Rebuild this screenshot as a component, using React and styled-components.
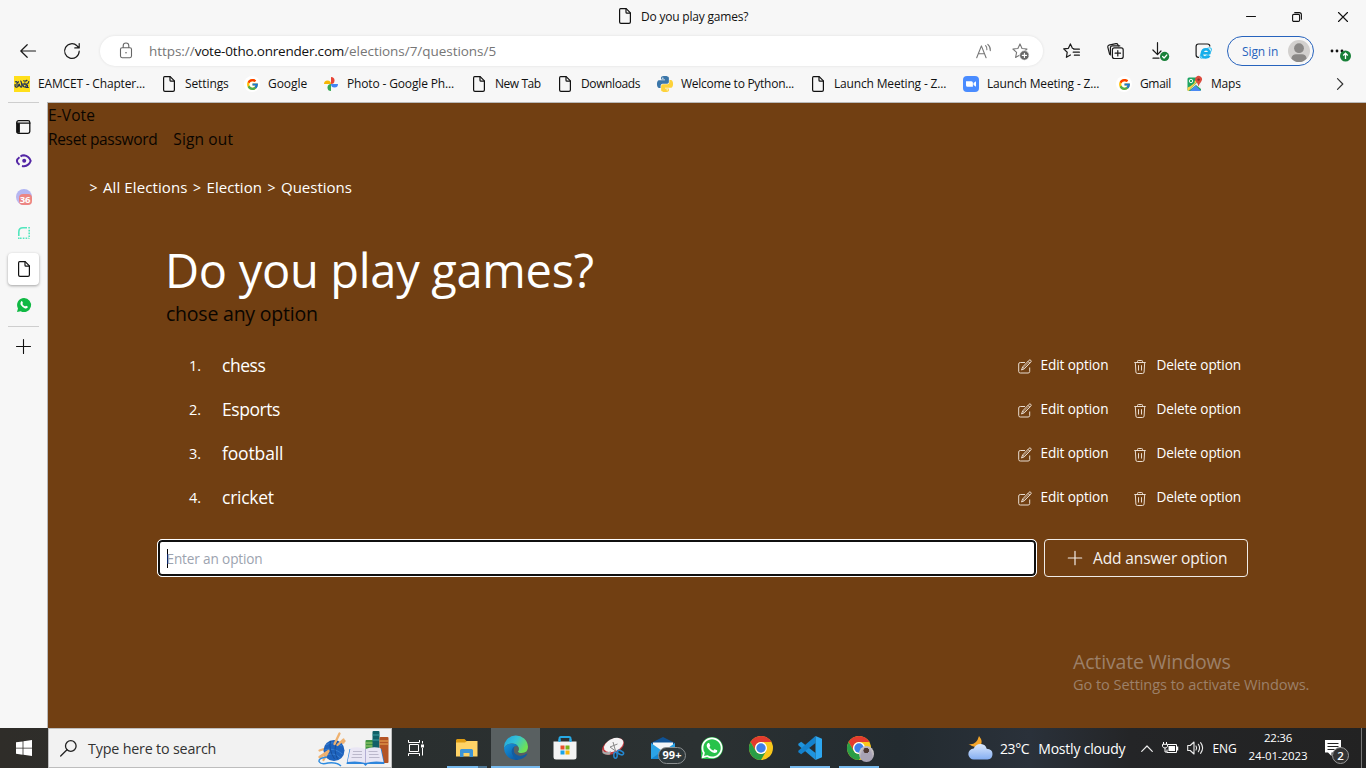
import React from "react";
import styled, { createGlobalStyle } from "styled-components";
import { FcGoogle } from "react-icons/fc";
import { FaWhatsapp } from "react-icons/fa";

const GlobalStyle = createGlobalStyle`
  * { box-sizing: border-box; }
  body {
    margin: 0;
    overflow: hidden;
    background: #f7f7f7;
    color: #111;
    font-family: "Open Sans", "Noto Sans", sans-serif;
  }
  svg { display: block; flex: none; overflow: visible; }
`;

/* ---------- shared ---------- */

const Text = styled.span`
  font-size: ${(p) => p.$size || 12}px;
  letter-spacing: ${(p) => p.$track || 0}px;
  white-space: pre;
`;

const Screen = styled.div`
  width: 1366px;
  height: 768px;
  display: flex;
  flex-direction: column;
  position: relative;
`;

/* ---------- browser chrome ---------- */

const TitleBar = styled.header`
  height: 34px;
  padding-left: 617px;
  display: flex;
  align-items: flex-start;
`;
const TabTitle = styled.div`
  height: 32px;
  display: flex;
  align-items: center;
  gap: 8px;
  flex: 1;
`;
const WindowButtons = styled.div`
  display: flex;
`;
const WindowButton = styled.div`
  width: 46px;
  height: 33px;
  display: flex;
  align-items: center;
  justify-content: center;
`;
const Toolbar = styled.div`
  height: 34px;
  display: flex;
  align-items: center;
`;
const ToolSlot = styled.div`
  width: ${(p) => p.$w}px;
  height: 34px;
  flex: none;
  display: flex;
  align-items: center;
  justify-content: center;
`;
const AddressBar = styled.div`
  width: 943px;
  height: 30px;
  flex: none;
  margin: 0 6px 0 12px;
  padding: 0 5px 0 18px;
  display: flex;
  align-items: center;
  border-radius: 15px;
  background: #fff;
  box-shadow: 0 0 3px rgba(0, 0, 0, 0.1);
  color: #767676;
`;
const Url = styled.div`
  flex: 1;
  margin-left: 15px;
  display: flex;
  strong { font-weight: 400; color: #111; }
`;
const SignIn = styled.div`
  width: 87px;
  height: 30px;
  flex: none;
  border: 1px solid #2763bd;
  border-radius: 15px;
  display: flex;
  align-items: center;
  justify-content: space-between;
  padding: 0 3px 0 14px;
  color: #2763bd;
`;
const Bookmarks = styled.nav`
  height: 34px;
  padding: 0 0 2px 14px;
  display: flex;
  align-items: center;
`;
const Bookmark = styled.div`
  width: ${(p) => p.$w}px;
  flex: none;
  display: flex;
  align-items: center;
  gap: 8px;
  ${Text} { margin-top: -1px; }
`;
const IconBox = styled.span`
  width: 16px;
  height: 16px;
  flex: none;
  display: flex;
  align-items: center;
  justify-content: center;
  border-radius: ${(p) => (p.$round ? "50%" : "0")};
  background: ${(p) => (p.$round ? "#fff" : "none")};
`;

/* ---------- body ---------- */

const Body = styled.div`
  flex: 1;
  min-height: 0;
  display: flex;
`;
const Sidebar = styled.aside`
  width: 47px;
  display: flex;
  flex-direction: column;
  align-items: center;
`;
const SideRule = styled.hr`
  width: 31px;
  height: 1px;
  margin: ${(p) => p.$m};
  border: 0;
  background: #cecece;
`;
const SideItem = styled.div`
  width: 31px;
  height: ${(p) => p.$h || 36}px;
  flex: none;
  display: flex;
  align-items: center;
  justify-content: center;
`;
const ActiveSide = styled.div`
  width: 31px;
  height: 32px;
  margin: 3px 0 2px;
  flex: none;
  display: flex;
  align-items: center;
  justify-content: center;
  border-radius: 4px;
  background: #fff;
  box-shadow: 0 1px 3px rgba(0, 0, 0, 0.35);
`;
const Page = styled.main`
  flex: 1;
  background: #713f12;
  border-top: 1px solid #b9b9b9;
  border-left: 1px solid #b9b9b9;
  color: #fff;
`;
const SiteHeader = styled.div`
  height: 48px;
  color: #0a0500;
`;
const SiteRow = styled.div`
  height: 24px;
  line-height: 24px;
  display: flex;
  gap: 16px;
`;
const Breadcrumb = styled.div`
  display: flex;
  align-items: center;
  gap: 5px;
  height: 24px;
  margin: 24px 0 0 41px;
`;
const Chevron = styled.span`
  width: 9px;
  font-size: 14px;
  text-align: center;
`;
const Question = styled.section`
  width: 1089px;
  margin: 46px 0 0 111px;
`;
const Title = styled.h1`
  margin: 0 0 0 6px;
  height: 50px;
  font-size: 47px;
  line-height: 50px;
  font-weight: 400;
  letter-spacing: -0.3px;
`;
const Subtitle = styled.p`
  margin: 5px 0 15px 7px;
  height: 28px;
  line-height: 28px;
  font-size: 19.5px;
  letter-spacing: -0.22px;
  color: #0a0500;
`;
const OptionRow = styled.div`
  height: 44px;
  display: flex;
  align-items: center;
  padding: 0 7px 0 30px;
`;
const OptionNumber = styled.span`
  width: 33px;
  font-size: 14.5px;
  padding-top: 1px;
`;
const OptionName = styled.span`
  flex: 1;
  font-size: 17.5px;
  letter-spacing: ${(p) => p.$track}px;
`;
const OptionAction = styled.div`
  display: flex;
  align-items: center;
  gap: ${(p) => p.$gap}px;
  margin-left: ${(p) => p.$ml || 0}px;
  padding-bottom: 2px;
  font-size: 13.6px;
  letter-spacing: -0.1px;
  svg { margin-top: 5px; }
`;
const Form = styled.div`
  display: flex;
  gap: 8px;
  margin-top: 20px;
`;
const Field = styled.div`
  width: 880px;
  height: 38px;
  margin-left: -2px;
  border: 1px solid #fff;
  border-radius: 5px;
  background: #fff;
  box-shadow: inset 0 0 0 2px #101010;
  display: flex;
  align-items: center;
  padding-left: 8.5px;
  color: #9ca3af;
`;
const Caret = styled.span`
  width: 1px;
  height: 19px;
  background: #000;
  margin-right: -1px;
`;
const AddButton = styled.button`
  width: 204px;
  height: 38px;
  margin-left: -1px;
  padding: 0 0 0 21px;
  display: flex;
  align-items: center;
  gap: 9px;
  border: 1px solid #f0ebe6;
  border-radius: 4px;
  background: transparent;
  color: #f5f1ee;
  font-family: inherit;
  font-weight: 500;
`;
const Watermark = styled.div`
  position: absolute;
  left: 1073px;
  top: 651px;
  display: flex;
  flex-direction: column;
  color: #9c8069;
  line-height: 22px;
`;

/* ---------- taskbar ---------- */

const Taskbar = styled.footer`
  height: 40px;
  flex: none;
  display: flex;
  color: #fff;
  background: linear-gradient(90deg, #2f2d29 0, #2a2f2f 392px, #2b3132 700px, #232b30 900px, #2a313a 1030px, #242527 1130px, #222 1366px);
`;
const StartButton = styled.div`
  width: 48px;
  display: flex;
  align-items: center;
  justify-content: center;
`;
const SearchBox = styled.div`
  width: 344px;
  background: #f2f2f2;
  border: 1px solid #bdbdbd;
  color: #333;
  display: flex;
  align-items: center;
  padding-left: 11px;
`;
const SearchText = styled.div`
  flex: 1;
  padding-left: 11px;
  padding-bottom: 1px;
`;
const TaskItem = styled.div`
  position: relative;
  width: ${(p) => p.$w || 49}px;
  flex: none;
  display: flex;
  align-items: center;
  justify-content: center;
  background: ${(p) => (p.$active ? "#596061" : "transparent")};
  box-shadow: ${(p) => (p.$active ? "inset 0 -2px #76b9ed" : "none")};
`;
const TaskViewItem = styled(TaskItem)`
  padding-right: 2px;
`;
const Running = styled.span`
  position: absolute;
  bottom: 0;
  left: 5px;
  width: 40px;
  height: 2px;
  background: ${(p) => (p.$split ? "linear-gradient(90deg, #76b9ed 31px, #4f7795 31px)" : "#76b9ed")};
`;
const CountBadge = styled.span`
  position: absolute;
  left: 20px;
  top: 19px;
  width: 28px;
  height: 17px;
  border: 1px solid #8b8f90;
  border-radius: 9px;
  background: #30393c;
  font-size: 11px;
  font-weight: 700;
  line-height: 14px;
  text-align: center;
`;
const Tray = styled.div`
  flex: 1;
  display: flex;
  align-items: center;
  justify-content: flex-end;
`;
const Weather = styled.div`
  display: flex;
  align-items: center;
  width: 173px;
`;
const Temperature = styled(Text)`
  margin: 0 9px 0 7px;
`;
const Clock = styled.div`
  width: 62px;
  margin-left: 2px;
  display: flex;
  flex-direction: column;
  align-items: center;
  line-height: 18px;
  padding-bottom: 2px;
`;
const Notice = styled.div`
  position: relative;
  width: 24px;
  height: 40px;
  margin-left: 16px;
  padding-top: 12px;
`;
const NoticeCount = styled.span`
  position: absolute;
  left: 7px;
  top: 19px;
  width: 17px;
  height: 17px;
  border: 1px solid #999;
  border-radius: 50%;
  background: #333;
  font-size: 11.5px;
  font-weight: 600;
  line-height: 15px;
  text-align: center;
`;
const ShowDesktop = styled.div`
  width: 5px;
  height: 40px;
  margin-left: 12px;
  border-left: 1px solid #777;
`;

/* ---------- icons ---------- */

const Line = ({ w, h, children, color = "#1a1a1a", sw = 1.2 }) => (
  <svg width={w} height={h} viewBox={`0 0 ${w} ${h}`} fill="none" stroke={color} strokeWidth={sw} strokeLinecap="round" strokeLinejoin="round">
    {children}
  </svg>
);

const FileIcon = () => (
  <Line w={16} h={16} color="#111" sw={1.2}>
    <path d="M3.6.6h5.6l4.2 4.2v9.2q0 1.4-1.4 1.4H4q-1.4 0-1.4-1.4V2Q2.6.6 3.6.6z" />
    <path d="M9 .8v3.4q0 .9.9.9h3.3" />
  </Line>
);
const BackIcon = () => <Line w={16} h={14}><path d="M15.5 7H.8M7.2.7.8 7l6.4 6.3" /></Line>;
const ReloadIcon = () => <Line w={16} h={16}><path d="M15.2 8.2A7.3 7.3 0 1 1 13 2.8l1.6 1.7M15.2.6v4.3h-4.4" /></Line>;
const LockIcon = () => (
  <Line w={16} h={16} color="#666" sw={1.1}>
    <rect x="2.5" y="4.7" width="11" height="10" rx="1.6" />
    <path d="M5.2 4.5V2.8a2.8 2.8 0 0 1 5.6 0v1.7" />
    <circle cx="8" cy="9.7" r=".8" fill="#666" stroke="none" />
  </Line>
);
const ReadAloudIcon = () => (
  <Line w={16} h={15} color="#777" sw={1.1}>
    <path d="M.7 13.7 5.4 1.9l4.7 11.8M2.3 9.7h6.2M9.6 1.7q1.6 1.6 1.3 4M11.8.3q2.9 2.6 2.5 6.3" />
  </Line>
);
const STAR = "M8 .9l2 4.6 5 .5-3.7 3.4 1 5L8 11.9l-4.4 2.5 1-5L.9 6l5-.5z";
const StarPlusIcon = () => (
  <Line w={17} h={17} color="#777" sw={1.1}>
    <path d={STAR} />
    <circle cx="12.4" cy="12.4" r="4.8" fill="#666" stroke="#fff" strokeWidth=".7" />
    <path d="M12.4 10.3v4.2M10.3 12.4h4.2" stroke="#fff" />
  </Line>
);
const FavoritesIcon = () => (
  <Line w={17} h={16}>
    <path d="M11 5.7 9.4 5.2 7.4.9l-2 4.4-4.7.6 3.5 3.4-.8 5 4-2.3M10.6 6.2h5.8M10.2 9.2h6.2M11.4 12.2h5" />
  </Line>
);
const CollectionsIcon = () => (
  <Line w={17} h={16}>
    <path d="M3.7 11.9 2.6 11.2.8 4.1q-.3-1.4 1-1.9L9 .7q1.4-.2 1.9 1l.4 1.2" />
    <rect x="5.4" y="4.9" width="10.8" height="10.6" rx="2" fill="#f7f7f7" />
    <path d="M10.8 7.5v5.4M8.1 10.2h5.4M3.4 11V4.9q0-2 2-2h7.4" />
  </Line>
);
const DownloadIcon = () => (
  <Line w={17} h={18}>
    <path d="M5.5.7v11.6M.9 8l4.6 4.6L9 9M1 16.2h6" />
    <circle cx="12.6" cy="14.4" r="4.6" fill="#188038" stroke="none" />
    <path d="m10.6 14.5 1.5 1.5 2.7-3" stroke="#fff" />
  </Line>
);
const IeModeIcon = () => (
  <Line w={17} h={17}>
    <path d="M3.5 14.4q-2.4 0-2.4-2.4V3.4Q1.1 1 3.5 1h9q2.3 0 2.3 2.1" />
    <ellipse cx="10.8" cy="10" rx="7" ry="2.7" transform="rotate(-42 10.8 10)" stroke="#3cc1f0" strokeWidth="1.1" />
    <path d="M6.9 10.3h7.6Q14.2 6.3 10.8 6.3T6.8 10.5q0 4.1 4 4.1 2.6 0 3.6-2" stroke="#18aeea" strokeWidth="2.5" strokeLinecap="butt" />
  </Line>
);
const Avatar = () => (
  <svg width="22" height="22" viewBox="0 0 22 22">
    <circle cx="11" cy="11" r="11" fill="#d2d0ce" />
    <circle cx="11" cy="8.2" r="4.9" fill="#8a8886" />
    <path d="M3.3 18.4q1-4.1 4.7-4.1h6q3.7 0 4.7 4.1Q15.5 22 11 22t-7.7-3.6z" fill="#8a8886" />
  </svg>
);
const MoreIcon = () => (
  <svg width="21" height="16" viewBox="0 0 21 16">
    <g fill="#111"><circle cx="2" cy="8" r="1.4" /><circle cx="7" cy="8" r="1.4" /><circle cx="12" cy="8" r="1.4" /></g>
    <circle cx="15.5" cy="13" r="5.5" fill="#188038" />
    <path d="M15.5 16v-5.7m-2.3 2.2 2.3-2.3 2.3 2.3" stroke="#fff" strokeWidth="1.3" fill="none" />
  </svg>
);
const SakshiIcon = () => (
  <svg width="16" height="16" viewBox="0 0 16 16">
    <path fill="#ffdf1b" d="M0 0h16v16H0z" />
    <g fill="none" stroke="#1f3158" strokeWidth="1.2">
      <path d="M1 6q1.5-1 2 .2t1.7-.8M1.2 8q-.6 3.5 1.5 3.2T5 7.8q1.200 3.500 2.300 3.300T7.600 7.500 6.500 5.300M9.300 4.500q2 1.500 4-.5M9.200 7.200q-.5 4 1.500 3.800t1.400-3q2 .6 2.800-2.800M11.500 11.500h3.300M3 7v3M10.800 6.500V9M13.500 9v3" />
    </g>
  </svg>
);
const PhotosIcon = () => (
  <svg width="14" height="14" viewBox="0 0 14 14">
    <path d="M7 7H0a3.500 3.500 0 0 1 7 0z" fill="#f6b704" />
    <path d="M7 7V0a3.500 3.500 0 0 1 0 7z" fill="#e84435" />
    <path d="M7 7h7a3.500 3.500 0 0 1-7 0z" fill="#4285f4" />
    <path d="M7 7v7a3.500 3.500 0 0 1 0-7z" fill="#34a853" />
  </svg>
);
const SNAKE = "M14.25.18l.9.2.73.26.59.3.45.32.34.34.25.34.16.33.1.3.04.26.02.2-.01.13V8.5l-.05.63-.13.55-.21.46-.26.38-.3.31-.33.25-.35.19-.35.14-.33.1-.3.07-.26.04-.21.02H8.77l-.69.05-.59.14-.5.22-.41.27-.33.32-.27.35-.2.36-.15.37-.1.35-.07.32-.04.27-.02.21v3.06H3.17l-.21-.03-.28-.07-.32-.12-.35-.18-.36-.26-.36-.36-.35-.46-.32-.59-.28-.73-.21-.88-.14-1.05-.05-1.23.06-1.22.16-1.04.24-.87.32-.71.36-.57.4-.44.42-.33.42-.24.4-.16.36-.1.32-.05.24-.01h8.38v-.83H6.18l-.01-2.75-.02-.37.05-.34.11-.31.17-.28.25-.26.31-.23.38-.2.44-.18.51-.15.58-.12.64-.1.71-.06.77-.04.84-.02 1.27.05z";
const PythonIcon = () => (
  <svg width="16" height="16" viewBox="0 0 24 24">
    <path d={SNAKE} fill="#3b76a9" />
    <path d={SNAKE} fill="#fdd23a" transform="rotate(180 12 12)" />
    <circle cx="8.7" cy="3.2" r="1.1" fill="#fff" />
    <circle cx="15.3" cy="20.8" r="1.1" fill="#fff" />
  </svg>
);
const ZoomIcon = () => (
  <svg width="16" height="16" viewBox="0 0 16 16">
    <rect width="16" height="16" rx="4" fill="#4a8cff" />
    <path d="M3 5.300h5.400q1.500 0 1.500 1.500v4H4.500Q3 10.800 3 9.300zM10.500 7l2.500-1.800v5.600L10.500 9z" fill="#fff" />
  </svg>
);
const MapsIcon = () => (
  <svg width="16" height="16" viewBox="0 0 16 16">
    <rect x=".5" y="1.5" width="13.5" height="13.5" rx="1.5" fill="#1ea362" />
    <path d="M1.500 15 12 4.500l2 2V13L9 9z" fill="#f1f1f1" />
    <path d="m3 15 5.500-5.500L14 15z" fill="#4a89f3" />
    <path d="m.5 12 8-8 1.700 1.700L1.500 15q-1 0-1-1z" fill="#ffd04b" />
    <path d="M1 2h6.500v5L3 10.500 1 11z" fill="#1ea362" />
    <circle cx="4" cy="5" r="1.7" fill="none" stroke="#fff" strokeWidth=".9" />
    <path d="M11.500 10.500Q10.800 7.500 9 5.600A3.400 3.400 0 1 1 14.300 5.400Q12.300 7.600 11.500 10.500z" fill="#dc4b3e" />
    <circle cx="11.6" cy="3.6" r="1.2" fill="#8a2d24" />
  </svg>
);
const TabsIcon = () => (
  <Line w={15} h={14} color="#111" sw={1.3}>
    <rect x=".8" y=".7" width="13" height="12.6" rx="1.8" />
    <path d="M.8 3.200h13" /><path d="M2.300 3.300v9.500" strokeWidth="3.2" strokeLinecap="butt" />
  </Line>
);
const EyeIcon = () => (
  <svg width="16" height="14" viewBox="0 0 16 14" fill="none">
    <path d="M3.500 3.200Q.9 5 .9 6.900t2.600 3.900" stroke="#5326a5" strokeWidth="2" />
    <path d="M4.500 2.500Q6 1.300 8 1.300q4.900.7 6.700 5.600-1.800 4.900-6.700 5.400-1 0-2-.3" stroke="#5326a5" strokeWidth="1.900" />
    <path d="M5.500 11.500V6.900a2.700 2.700 0 1 1 2.700 2.700" stroke="#f7f7f7" strokeWidth="1" />
    <circle cx="8.2" cy="6.8" r="2" fill="#5326a5" />
  </svg>
);
const Badge36 = styled.div`
  position: relative;
  width: 16px;
  height: 16px;
  border-radius: 50%;
  background: linear-gradient(#b0b5f3, #c2b8ec);
  &::after {
    content: "36";
    position: absolute;
    left: 3px;
    top: 5px;
    width: 13px;
    height: 11px;
    border-radius: 4px;
    background: #ec8583;
    color: #fff;
    font-size: 9.5px;
    font-weight: 700;
    line-height: 11px;
    text-align: center;
    letter-spacing: -0.3px;
  }
`;
const DottedIcon = () => (
  <svg width="12" height="12" viewBox="0 0 12 12" fill="none" stroke="#52e6bd" strokeWidth="1.6">
    <path d="M.8 9V5Q.8.8 5 .8h4" /><path d="M10.300.8H12M11.200 2.800v9M.8 10.500V12M2 11.200h9" strokeDasharray="1.6 1.2" />
  </svg>
);
const WhatsMini = () => (
  <svg width="14" height="14" viewBox="0 0 24 24">
    <path d="M12 0a12 12 0 1 1-5.700 22.500L0 24l1.700-6A12 12 0 0 1 12 0z" fill="#10b944" />
    <path d="M7.300 5.600q1-.8 1.800.5l1 2.200q.2.700-.9 1.800 1.600 3 4.700 4.400 1-1.400 1.600-1.400l2.800 1.400q.4.600-.3 2.100-1.600 1.900-4.200 1.200-4.600-1.400-7.500-6.100-1.400-3.500 1-6.100z" fill="#fff" />
  </svg>
);
const EditIcon = () => (
  <svg width="14" height="15" viewBox="0 0 14 15" fill="none" stroke="#e9dccf" strokeWidth="1" strokeLinejoin="round">
    <path d="M7 3.500H2.300Q.7 3.500.7 5v7.500Q.7 14 2.300 14h7.800q1.600 0 1.600-1.500V8.500" />
    <path d="M11 1.300q.9-.9 1.800 0t0 1.800L6.300 9.800 3.500 11l1.100-3zM10 2.300l1.800 1.800M4.600 8.100l1.700 1.700" />
    <path d="M5.500 8.900 10.900 3.300" strokeWidth=".6" />
  </svg>
);
const TrashIcon = () => (
  <svg width="12" height="14" viewBox="0 0 12 14" fill="none" stroke="#e9dccf" strokeWidth="1">
    <path d="M.3 2.500h11.400M1.300 2.500l.6 9.500q.1 1.500 1.500 1.500h5.200q1.400 0 1.500-1.500l.6-9.500M3.500 2.500V1.300q0-.8.8-.8h3.400q.8 0 .8.800v1.200M4.500 5.200v5.300M7.500 5.200v5.300" />
  </svg>
);

const StartIcon = () => (
  <svg width="16" height="16" viewBox="0 0 16 16" fill="#fff">
    <path d="M0 2.300 6.600 1.400v6.300H0zM7.400 1.300 16 0v7.700H7.400zM0 8.500h6.600v6.200L0 13.800zM7.400 8.500H16V16l-8.600-1.200z" />
  </svg>
);
const SearchIcon = () => <Line w={17} h={17} color="#222" sw={1.3}><circle cx="10.8" cy="6" r="5.3" /><path d="M7 9.800.7 16" /></Line>;
const YarnBooks = () => (
  <svg width="74" height="37" viewBox="0 0 73 37" fill="none">
    <path d="M2 20.500 26 12.500M3 27 27 11" stroke="#efb16f" strokeWidth="2.3" strokeLinecap="round" />
    <circle cx="16.5" cy="20.5" r="10.5" fill="#1d62bd" />
    <path d="M8.500 15q7-5 16 1M7 20q9-3 18 4M9 25q8-3 14 3" stroke="#377fd2" strokeWidth="1" />
    <path d="M13 11q-2 9 4 18M20 11q-5 8 0 18" stroke="#174f9c" strokeWidth="1" />
    <path d="m2 27 9-6M6 30l5-9M17 14l5-10.500M20 15l6-5.500" stroke="#efb16f" strokeWidth="2.3" strokeLinecap="round" />
    <path d="M9 27Q1 28 1.500 31.500q2 3.500 9 1.500 9-1 13 3" stroke="#2d8be0" strokeWidth="1.4" />
    <rect x="48" y="10" width="8" height="17" rx="1" fill="#3f9443" /><path d="M48 13h8M48 16h8" stroke="#a8d16e" />
    <rect x="55" y="1" width="7" height="28" rx="1" fill="#126068" /><path d="M55 5h7M55 10h7" stroke="#3c9ea2" />
    <rect x="62" y="7" width="9" height="26" rx="1" fill="#b45425" /><path d="M62 11h9M62 14h9" stroke="#efad57" />
    <path d="M32 19 29 34h17l2 2 2-2h17l-3-15z" fill="#2e86dc" />
    <path d="M33 18q8-2 15 1 7-3 15-1l3 14q-10-1.500-18 1-8-2.500-18-1z" fill="#e9e6f4" />
    <path d="M48 19v14" stroke="#b3aed4" /><path d="M35.500 21.500h9M35 24.500h9.500M34 27.500h10.500M51 21.500h9M51.500 24.500H61M51.500 27.500H62" stroke="#bbb8cb" />
  </svg>
);
const TaskViewIcon = () => (
  <svg width="17" height="16" viewBox="0 0 17 16" fill="none" stroke="#fff" strokeWidth="1">
    <path d="M.5 0v2.500h11V0M.5 16v-2.500h11V16M1.500 4.500h9v7h-9zM14.500 1v2.500M14.500 8v7.500" /><path d="M13 4.500h3v3h-3z" fill="#fff" stroke="none" />
  </svg>
);
const FolderIcon = () => (
  <svg width="22" height="18" viewBox="0 0 22 18">
    <path d="M1 0h7.500l2 2H21v3H0V1z" fill="#dd9b12" /><path d="M0 3.500h9L11 2h10.500v15.500H0z" fill="#ffd366" />
    <path d="M4 18v-6.500Q4 10 5.500 10h10q1.500 0 1.500 1.500V18h-3.500v-4h-6v4z" fill="#3e95d6" />
  </svg>
);
const EdgeIcon = () => (
  <svg width="24" height="24" viewBox="0 0 24 24">
    <defs>
      <linearGradient id="edge-crest" x1="0" y1="0" x2="1" y2=".5"><stop offset="0" stopColor="#1fa2dc" /><stop offset=".5" stopColor="#35c1d8" /><stop offset="1" stopColor="#6ee354" /></linearGradient>
      <linearGradient id="edge-base" x1="0" y1="0" x2=".8" y2="1"><stop offset="0" stopColor="#1697dd" /><stop offset="1" stopColor="#0c59a4" /></linearGradient>
    </defs>
    <path d="M0 12A12 12 0 0 1 24 10.800Q24 17 17.500 17q-3.800 0-3.500-1.500 1.500-2 .3-4.500Q12.500 7.600 8 7.600 2 8 0 12z" fill="url(#edge-crest)" />
    <path d="M0 12Q2 8 7.500 7.600q5.300 0 6.800 3.400-2-1.500-4.500 0-2 6.500 4.700 12.700Q7 25 2.500 19.300 0 15.600 0 12z" fill="url(#edge-base)" />
    <path d="M10.800 10.500q-2 4.500.5 7.200 4 4.500 11.500 0 1-.3.300.5-3 4.500-8.600 5.500Q8 21.500 7.600 15.500q.2-3.700 3.200-5z" fill="#155c9f" />
    <path d="M14 15.500q1.400-2 .3-4.500-1.500-1.300-3.500-.5-2 4.500.5 7.200 3 3 9 1.300l1.500-2.200q-1.800.4-4.300.2-3.800 0-3.500-1.500z" fill="#596061" />
    <path d="M11.300 17.700q4 4.500 11.500 0l.3.500-2 2.500q-6 3-9.800-3z" fill="#155c9f" />
  </svg>
);
const StoreIcon = () => (
  <svg width="24" height="24" viewBox="0 0 24 24">
    <path d="M6.500 7V2.500Q6.500 1 8 1h8q1.500 0 1.500 1.500V7" fill="none" stroke="#27a9e4" strokeWidth="2" />
    <path d="M.5 5.500h23V21q0 2.500-2.500 2.500H3Q.5 23.500.5 21z" fill="#f3f3f3" />
    <path d="M5.500 6V3h2v3zM16.500 6V3h2v3z" fill="#27a9e4" />
    <path d="M7.500 9.500h4v4h-4z" fill="#e9502b" /><path d="M12.500 9.500h4v4h-4z" fill="#7cb518" /><path d="M7.500 14.500h4v4h-4z" fill="#1aa3e8" /><path d="M12.500 14.500h4v4h-4z" fill="#f7b50b" />
  </svg>
);
const SnipIcon = () => (
  <svg width="25" height="23" viewBox="0 0 25 23" fill="none">
    <ellipse cx="12" cy="9.5" rx="11.8" ry="7.2" fill="#c43b3f" transform="rotate(-28 12 9.5)" />
    <ellipse cx="12.7" cy="8" rx="10.3" ry="6.3" fill="#f4f3f4" transform="rotate(-24 12.7 8)" />
    <path d="M1.500 12.500q2 4.500 8.500 1.500l-1 3.500q-5 1-7.500-1.500z" fill="#aaa" />
    <path d="m12 5 2.700 9.500M16.500 7 9 10l5.500 4" stroke="#888" strokeWidth="1" />
    <ellipse cx="14.5" cy="18.3" rx="1.7" ry="3" stroke="#2587d0" strokeWidth="1.5" /><ellipse cx="19.5" cy="15.6" rx="3.3" ry="1.8" stroke="#2587d0" strokeWidth="1.5" transform="rotate(25 19.5 15.6)" />
  </svg>
);
const MailIcon = () => (
  <svg width="24" height="22" viewBox="0 0 24 22">
    <path d="M0 6 12 0l12 6v16H0z" fill="#0f5294" /><path d="M2 5.500h20V14H2z" fill="#f3f6f8" />
    <path d="m0 6 12 8.500L24 6v16H0z" fill="#2ba3e6" /><path d="m0 22 12-8.500L24 22z" fill="#1686d0" />
  </svg>
);
const WhatsAppBadge = styled.div`
  width: 22px;
  height: 22px;
  border-radius: 50% 50% 50% 15%;
  background: #28c34b;
  color: #fff;
  display: flex;
  align-items: center;
  justify-content: center;
`;
const ChromeIcon = () => (
  <svg width="24" height="24" viewBox="0 0 24 24">
    <circle cx="12" cy="12" r="12" fill="#f9c71b" />
    <path d="M1.600 6A12 12 0 0 1 22.400 6H12a6 6 0 0 0-5.200 9z" fill="#e33b2e" />
    <path d="M1.600 6A12 12 0 0 0 12 24l5.200-9a6 6 0 0 1-10.400 0z" fill="#2a9d46" />
    <circle cx="12" cy="12" r="6" fill="#fff" /><circle cx="12" cy="12" r="4.7" fill="#3f7fe8" />
  </svg>
);
const VsCodeIcon = () => (
  <svg width="24" height="24" viewBox="0 0 24 24">
    <path d="M17.500 24v-7L3.200 5.800.3 7.700v1.500z" fill="#1f94dd" />
    <path d="M17.500 0v7L3.200 18.200.3 16.300v-1.500z" fill="#1482cd" />
    <path d="M17.500 0 24 2.800v18.400L17.500 24z" fill="#2da7f0" />
  </svg>
);
const ProfileDot = styled.span`
  position: absolute;
  left: 25px;
  top: 18px;
  width: 15px;
  height: 16px;
  border-radius: 50%;
  background: radial-gradient(circle at 48% 28%, #4e3932 2.5px, transparent 3px), radial-gradient(ellipse at 50% 100%, #a8a3b4 6px, #d8d2ce 9px);
`;
const WeatherIcon = () => (
  <svg width="25" height="24" viewBox="0 0 25 24">
    <defs><linearGradient id="cloud" x1="0" y1="0" x2="0" y2="1"><stop offset="0" stopColor="#dbe8fb" /><stop offset="1" stopColor="#84aef2" /></linearGradient></defs>
    <path d="M11 0q4.500 5.500 1.500 9.500Q8 13.500.5 8q8 1.500 10.500-8z" fill="#f4a52a" />
    <path d="M6 23.500a5.500 5.500 0 0 1-.3-11Q8 7.500 13 8q4.500.3 5.700 4.700Q24.500 13 24.500 18t-5 5.500z" fill="url(#cloud)" />
  </svg>
);
const TrayUp = () => <Line w={12} h={7} color="#eee"><path d="M.7 6.300 6 1l5.300 5.300" /></Line>;
const BatteryIcon = () => (
  <svg width="17" height="13" viewBox="0 0 17 13" fill="none" stroke="#fff">
    <path d="M6 2.500h8.500v8H5v-3" /><path d="M6.500 4H13v5H6.500z" fill="#fff" stroke="none" /><path d="M15.500 4.500v4" strokeWidth="1.5" />
    <path d="M1.500 0v2M4.500 0v2M.5 2.300h5v2Q5 6 3 6T.5 4.300zM3 6v4h2" />
  </svg>
);
const VolumeIcon = () => (
  <Line w={17} h={14} color="#eee" sw={1.1}>
    <path d="M.7 4.500h2.500L7 1v12L3.200 9.500H.7zM9 5q1.300 2 0 4M11.300 3.300q2.600 3.700 0 7.400M13.600 1.700q4 5.300 0 10.600" />
  </Line>
);
const MessageIcon = () => (
  <svg width="16" height="16" viewBox="0 0 16 16"><path d="M0 0h16v12.500H6.500V16L3 12.500H0z" fill="#fff" /><path d="M2.500 3.500h11M2.500 6.500h11M2.500 9.500h7" stroke="#222" strokeWidth="1" /></svg>
);

/* ---------- data ---------- */

const bookmarks = [
  { label: "EAMCET - Chapter...", w: 147, track: -0.18, icon: <SakshiIcon /> },
  { label: "Settings", w: 83, track: -0.1, icon: <FileIcon /> },
  { label: "Google", w: 79, track: -0.05, icon: <FcGoogle size={13} />, round: true },
  { label: "Photo - Google Ph...", w: 148, track: -0.15, icon: <PhotosIcon /> },
  { label: "New Tab", w: 86, track: -0.45, icon: <FileIcon /> },
  { label: "Downloads", w: 100, track: -0.38, icon: <FileIcon /> },
  { label: "Welcome to Python...", w: 153, track: -0.27, icon: <PythonIcon /> },
  { label: "Launch Meeting - Z...", w: 153, track: -0.17, icon: <FileIcon /> },
  { label: "Launch Meeting - Z...", w: 153, track: -0.17, icon: <ZoomIcon /> },
  { label: "Gmail", w: 71, track: -0.35, icon: <FcGoogle size={13} />, round: true },
  { label: "Maps", w: 149, track: -0.2, icon: <MapsIcon /> },
];
const options = [
  { name: "chess", track: -0.45 },
  { name: "Esports", track: -0.45 },
  { name: "football", track: -0.15 },
  { name: "cricket", track: -0.25 },
];

/* ---------- page ---------- */

function BrowserHeader() {
  return (
    <>
      <TitleBar>
        <TabTitle><FileIcon /><Text $track={-0.2}>Do you play games?</Text></TabTitle>
        <WindowButtons>
          <WindowButton><Line w={10} h={10} color="#111" sw={1}><path d="M.5 4.500h9" /></Line></WindowButton>
          <WindowButton>
            <Line w={10} h={10} color="#111" sw={1.1}><rect x=".6" y="2.4" width="7" height="7" rx="1.2" /><path d="M2.700.6h4.600q2.100 0 2.100 2.100v4.600" /></Line>
          </WindowButton>
          <WindowButton><Line w={10} h={10} color="#111" sw={1.1}><path d="m.5.5 9 9M9.500.5l-9 9" /></Line></WindowButton>
        </WindowButtons>
      </TitleBar>
      <Toolbar>
        <ToolSlot $w={56}><BackIcon /></ToolSlot>
        <ToolSlot $w={32}><ReloadIcon /></ToolSlot>
        <AddressBar>
          <LockIcon />
          <Url>
            <Text $size={13.5} $track={-0.05}>https://</Text>
            <Text as="strong" $size={13.5} $track={-0.2}>vote-0tho.onrender.com</Text>
            <Text $size={13.5} $track={-0.04}>/elections/7/questions/5</Text>
          </Url>
          <ToolSlot $w={36}><ReadAloudIcon /></ToolSlot>
          <ToolSlot $w={36}><StarPlusIcon /></ToolSlot>
        </AddressBar>
        <ToolSlot $w={44}><FavoritesIcon /></ToolSlot>
        <ToolSlot $w={44}><CollectionsIcon /></ToolSlot>
        <ToolSlot $w={46}><DownloadIcon /></ToolSlot>
        <ToolSlot $w={40}><IeModeIcon /></ToolSlot>
        <ToolSlot $w={4} />
        <SignIn><Text $track={-0.1}>Sign in</Text><Avatar /></SignIn>
        <ToolSlot $w={52}><MoreIcon /></ToolSlot>
      </Toolbar>
      <Bookmarks>
        {bookmarks.map((b, i) => (
          <Bookmark key={i} $w={b.w}>
            <IconBox $round={b.round}>{b.icon}</IconBox>
            <Text $track={b.track}>{b.label}</Text>
          </Bookmark>
        ))}
        <Line w={8} h={12} color="#333"><path d="m1.500.7 5.300 5.300-5.300 5.300" /></Line>
      </Bookmarks>
    </>
  );
}

function SideRail() {
  return (
    <Sidebar>
      <SideRule $m="0 0 6px" />
      <SideItem><TabsIcon /></SideItem>
      <SideItem $h={32}><EyeIcon /></SideItem>
      <SideItem $h={39}><Badge36 /></SideItem>
      <SideItem $h={34}><DottedIcon /></SideItem>
      <ActiveSide><FileIcon /></ActiveSide>
      <SideItem><WhatsMini /></SideItem>
      <SideRule $m="3px 0 3px" />
      <SideItem $h={33}><Line w={15} h={15} color="#111" sw={1.1}><path d="M7.500.5v14M.5 7.500h14" /></Line></SideItem>
    </Sidebar>
  );
}

function Election() {
  return (
    <Page>
      <SiteHeader>
        <SiteRow><Text $size={15.5} $track={0.1}>E-Vote</Text></SiteRow>
        <SiteRow><Text $size={15.5} $track={-0.33}>Reset password</Text><Text $size={15.5} $track={0.13}>Sign out</Text></SiteRow>
      </SiteHeader>
      <Breadcrumb>
        <Chevron>&gt;</Chevron><Text $size={15} $track={0.1}>All Elections</Text>
        <Chevron>&gt;</Chevron><Text $size={15} $track={0.05}>Election</Text>
        <Chevron>&gt;</Chevron><Text $size={15}>Questions</Text>
      </Breadcrumb>
      <Question>
        <Title>Do you play games?</Title>
        <Subtitle>chose any option</Subtitle>
        {options.map((option, i) => (
          <OptionRow key={option.name}>
            <OptionNumber>{i + 1}.</OptionNumber>
            <OptionName $track={option.track}>{option.name}</OptionName>
            <OptionAction $gap={9}><EditIcon />Edit option</OptionAction>
            <OptionAction $gap={10} $ml={26}><TrashIcon />Delete option</OptionAction>
          </OptionRow>
        ))}
        <Form>
          <Field><Caret /><Text $size={13.6} $track={-0.14}>Enter an option</Text></Field>
          <AddButton>
            <Line w={18} h={18} color="#f3ece6" sw={1.2}><path d="M9 2.300v13.400M2.300 9h13.400" /></Line>
            <Text $size={15.5} $track={-0.12}>Add answer option</Text>
          </AddButton>
        </Form>
      </Question>
    </Page>
  );
}

function WindowsTaskbar() {
  return (
    <Taskbar>
      <StartButton><StartIcon /></StartButton>
      <SearchBox>
        <SearchIcon />
        <SearchText><Text $size={14.3} $track={-0.18}>Type here to search</Text></SearchText>
        <YarnBooks />
      </SearchBox>
      <TaskViewItem $w={50}><TaskViewIcon /></TaskViewItem>
      <TaskItem><FolderIcon /><Running $split /></TaskItem>
      <TaskItem $active><EdgeIcon /></TaskItem>
      <TaskItem><StoreIcon /></TaskItem>
      <TaskItem><SnipIcon /></TaskItem>
      <TaskItem><MailIcon /><CountBadge>99+</CountBadge></TaskItem>
      <TaskItem><WhatsAppBadge><FaWhatsapp size={24} /></WhatsAppBadge></TaskItem>
      <TaskItem><ChromeIcon /></TaskItem>
      <TaskItem><VsCodeIcon /><Running /></TaskItem>
      <TaskItem><ChromeIcon /><ProfileDot /><Running /></TaskItem>
      <Tray>
        <Weather>
          <WeatherIcon />
          <Temperature $size={14} $track={-0.4}>23°C</Temperature>
          <Text $size={14} $track={-0.2}>Mostly cloudy</Text>
        </Weather>
        <TrayUp />
        <ToolSlot $w={34}><BatteryIcon /></ToolSlot>
        <VolumeIcon />
        <ToolSlot $w={41}><Text $track={-0.2}>ENG</Text></ToolSlot>
        <Clock><Text $size={11.5} $track={-0.3}>22:36</Text><Text $size={11.5} $track={-0.1}>24-01-2023</Text></Clock>
        <Notice><MessageIcon /><NoticeCount>2</NoticeCount></Notice>
        <ShowDesktop />
      </Tray>
    </Taskbar>
  );
}

export default function App() {
  return (
    <Screen>
      <GlobalStyle />
      <BrowserHeader />
      <Body>
        <SideRail />
        <Election />
      </Body>
      <WindowsTaskbar />
      <Watermark>
        <Text $size={19.5} $track={-0.15}>Activate Windows</Text>
        <Text $size={14.6} $track={-0.08}>Go to Settings to activate Windows.</Text>
      </Watermark>
    </Screen>
  );
}
